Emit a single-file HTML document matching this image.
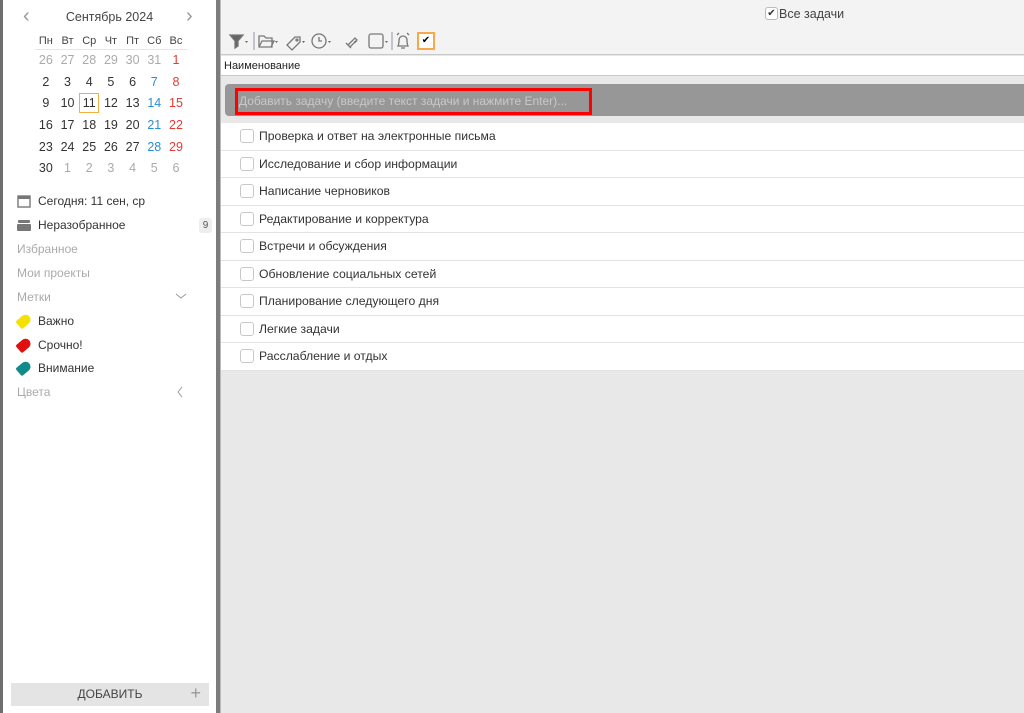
<!DOCTYPE html>
<html><head><meta charset="utf-8"><style>
*{box-sizing:border-box;margin:0;padding:0}
body{width:1024px;height:713px;overflow:hidden;background:#6e6e6e;font-family:"Liberation Sans",sans-serif;font-size:12px;color:#333;position:relative}
#side{position:absolute;left:3px;top:0;width:213px;height:713px;background:#fff}
#gap{position:absolute;left:216px;top:0;width:4px;height:713px;background:#7c7c7c}
#main{position:absolute;left:220px;top:0;width:804px;height:713px;background:#e8e8e8;border-left:1px solid #bbb}
.hdr{position:absolute;top:10px;left:0;width:213px;text-align:center;font-size:12.5px;color:#444}
.arr{position:absolute;top:5px;font-size:20px;color:#999;font-weight:300}
table{position:absolute;left:32px;top:33px;border-collapse:collapse}
td{width:21.7px;height:21.7px;text-align:center;font-size:12.5px;color:#333;padding:0}
tr.w td{font-size:11px;height:16px;border-bottom:1px solid #e6e6e6;color:#444}
.g{color:#aaa}.b{color:#2a8fd0}.r{color:#e53935}
.today{outline:1px solid #f0b040;outline-offset:-2px}
.it{position:absolute;left:14px;font-size:12px;color:#333;display:flex;align-items:center;gap:7px}
.it.gr{color:#aaa}
.tag{width:14px;height:10px;border-radius:2px 6px 6px 2px;transform:rotate(-40deg)}
.addbtn{position:absolute;left:8px;top:683px;width:198px;height:23px;background:#e4e4e4;text-align:center;line-height:23px;font-size:12px;color:#444}
.top{position:absolute;left:0;top:0;width:804px;height:55px;background:#f3f3f3;border-bottom:1px solid #c8c8c8}
.colh{position:absolute;left:0;top:56px;width:804px;height:20px;background:#fff;border-bottom:1px solid #c8c8c8;font-size:11px;line-height:20px;padding-left:3px;color:#222}
.inp{position:absolute;left:4px;top:84px;width:800px;height:32px;background:#979797;border-radius:4px 0 0 4px}
.red{position:absolute;left:10px;top:4px;width:357px;height:27px;border:3px solid #f00;color:#c9c9c9;font-size:12px;line-height:21px;padding-left:1px;white-space:nowrap;overflow:hidden}
.tasks{position:absolute;left:0;top:123px;width:804px;background:#fff}
.row{height:27.5px;border-bottom:1px solid #e3e3e3;display:flex;align-items:center;padding-left:19px;font-size:12.2px;color:#333}
.cb{width:14px;height:14px;border:1px solid #c8c8c8;border-radius:3px;margin-right:5px}
</style></head><body>
<div id="side">
 <div class="hdr">Сентябрь 2024</div>
 <div class="arr" style="left:20px">‹</div><div class="arr" style="left:183px">›</div>
 <table>
 <tr class="w"><td>Пн</td><td>Вт</td><td>Ср</td><td>Чт</td><td>Пт</td><td class="b">Сб</td><td class="r">Вс</td></tr>
 <tr><td class="g">26</td><td class="g">27</td><td class="g">28</td><td class="g">29</td><td class="g">30</td><td class="g">31</td><td class="r">1</td></tr>
 <tr><td>2</td><td>3</td><td>4</td><td>5</td><td>6</td><td class="b">7</td><td class="r">8</td></tr>
 <tr><td>9</td><td>10</td><td class="today">11</td><td>12</td><td>13</td><td class="b">14</td><td class="r">15</td></tr>
 <tr><td>16</td><td>17</td><td>18</td><td>19</td><td>20</td><td class="b">21</td><td class="r">22</td></tr>
 <tr><td>23</td><td>24</td><td>25</td><td>26</td><td>27</td><td class="b">28</td><td class="r">29</td></tr>
 <tr><td>30</td><td class="g">1</td><td class="g">2</td><td class="g">3</td><td class="g">4</td><td class="g">5</td><td class="g">6</td></tr>
 </table>
 <div class="it" style="top:194px"><svg width="14" height="14"><rect x="1" y="2" width="12" height="11" fill="none" stroke="#777" stroke-width="1.4"/><rect x="1" y="2" width="12" height="3" fill="#777"/></svg>Сегодня: 11 сен, ср</div>
 <div class="it" style="top:218px"><svg width="14" height="14"><rect x="1" y="2" width="12" height="3" rx="1" fill="#777"/><rect x="0" y="6" width="14" height="7" rx="1" fill="#777"/></svg>Неразобранное</div>
 <div style="position:absolute;left:196px;top:218px;width:13px;height:15px;background:#eee;border-radius:3px;font-size:10px;text-align:center;line-height:15px;color:#555">9</div>
 <div class="it gr" style="top:242px">Избранное</div>
 <div class="it gr" style="top:266px">Мои проекты</div>
 <div class="it gr" style="top:290px">Метки</div>
 <svg style="position:absolute;left:172px;top:292px" width="12" height="8"><path d="M1 2l5 4 5-4" fill="none" stroke="#999"/></svg>
 <div class="it" style="top:314px"><span class="tag" style="background:#f5e000"></span>Важно</div>
 <div class="it" style="top:338px"><span class="tag" style="background:#e01010"></span>Срочно!</div>
 <div class="it" style="top:361px"><span class="tag" style="background:#108a8a"></span>Внимание</div>
 <div class="it gr" style="top:385px">Цвета</div>
 <svg style="position:absolute;left:173px;top:386px" width="8" height="12"><path d="M6 1L2 6l4 5" fill="none" stroke="#999"/></svg>
 <div class="addbtn">ДОБАВИТЬ<span style="position:absolute;right:8px;top:-1px;font-size:18px;color:#999">+</span></div>
</div>
<div id="gap"></div>
<div id="main">
 <div class="top">
  <div style="position:absolute;left:544px;top:7px;width:13px;height:13px;border:1px solid #bbb;border-radius:3px;background:#fff;font-size:10px;line-height:11px;text-align:center">✔</div>
  <div style="position:absolute;left:558px;top:7px;font-size:12.5px;color:#444">Все задачи</div>
  <svg style="position:absolute;left:6px;top:30px" width="220" height="22" fill="none" stroke="#777" stroke-width="1.3">
   <path d="M3 5h13l-5 6v5l-3 2v-7z" fill="#666"/><path d="M18 11l1.5 2 1.5-2" fill="#666" stroke="none"/>
   <line x1="27" y1="2" x2="27" y2="20" stroke="#aab"/>
   <path d="M32 6h5l2 2h6v9H32z"/><path d="M32 17l3-6h12l-3 6"/><path d="M48 11l1.5 2 1.5-2" fill="#666" stroke="none"/>
   <path d="M60 15l8-8h5v5l-8 8z"/><circle cx="70" cy="10" r="1"/><path d="M75 11l1.5 2 1.5-2" fill="#666" stroke="none"/>
   <circle cx="92" cy="11" r="7"/><path d="M92 7v4h3"/><path d="M101 11l1.5 2 1.5-2" fill="#666" stroke="none"/>
   <path d="M121 15l7-7 2 2-7 7z M119 13l5 5"/><path d="M127 11l1.5 2 1.5-2" fill="#666" stroke="none"/>
   <rect x="142" y="4" width="14" height="14" rx="2"/><path d="M158 11l1.5 2 1.5-2" fill="#666" stroke="none"/>
   <line x1="165" y1="2" x2="165" y2="20" stroke="#aab"/>
   <path d="M171 16c1-2 1-4 1-6a4 4 0 0 1 8 0c0 2 0 4 1 6z M174 18h4 M170 5l2-2 M182 5l-2-2"/>
  </svg>
  <div style="position:absolute;left:196px;top:32px;width:18px;height:18px;background:#f7a94a;padding:2px"><div style="width:14px;height:14px;background:#fff;font-size:10px;line-height:14px;text-align:center;color:#000">✔</div></div>
 </div>
 <div class="colh">Наименование</div>
 <div class="inp"><div class="red">Добавить задачу (введите текст задачи и нажмите Enter)...</div></div>
 <div class="tasks">
  <div class="row"><span class="cb"></span>Проверка и ответ на электронные письма</div>
  <div class="row"><span class="cb"></span>Исследование и сбор информации</div>
  <div class="row"><span class="cb"></span>Написание черновиков</div>
  <div class="row"><span class="cb"></span>Редактирование и корректура</div>
  <div class="row"><span class="cb"></span>Встречи и обсуждения</div>
  <div class="row"><span class="cb"></span>Обновление социальных сетей</div>
  <div class="row"><span class="cb"></span>Планирование следующего дня</div>
  <div class="row"><span class="cb"></span>Легкие задачи</div>
  <div class="row"><span class="cb"></span>Расслабление и отдых</div>
 </div>
</div>
</body></html>
